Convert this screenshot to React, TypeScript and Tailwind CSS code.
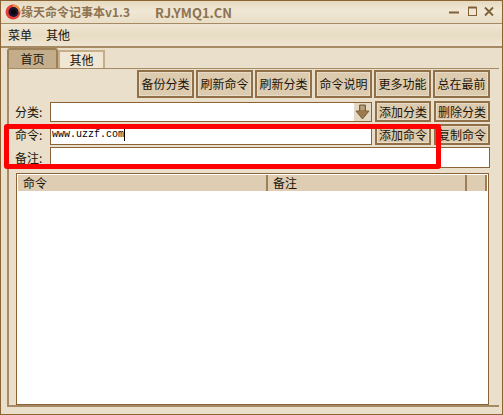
import type { ReactNode } from "react";

const cjk = "font-['Noto_Sans_CJK_SC','Liberation_Sans',sans-serif]";

function Btn({ w, h = "h-[28px]", children }: { w: string; h?: string; children: ReactNode }) {
  return (
    <div
      className={`${w} ${h} flex shrink-0 items-center justify-center overflow-hidden whitespace-nowrap border-2 border-[#8f7048] bg-[#dccbae] text-[12px] leading-none text-[#1c1408] shadow-[inset_0_0_0_1px_#e8dcc6]`}
    >
      {children}
    </div>
  );
}

function Label({ children }: { children: ReactNode }) {
  return <div className="w-[41px] shrink-0 whitespace-nowrap pl-[6px] text-[12px] leading-none text-[#1c1408]">{children}</div>;
}

function AppIcon() {
  return (
    <svg width="16" height="16" viewBox="0 0 16 16" className="shrink-0">
      <circle cx="8" cy="8" r="7.5" fill="#e2403a" />
      <path d="M8 .5A7.5 7.5 0 0 1 15.5 8H8z" fill="#e8913a" />
      <circle cx="8.5" cy="8" r="5" fill="#1a1430" />
      <circle cx="8.5" cy="8" r="2.5" fill="#0a0708" />
    </svg>
  );
}

function WindowButtons() {
  return (
    <svg width="45" height="12" viewBox="0 0 45 12" className="shrink-0" fill="none" stroke="#7f6038">
      <path d="M0 6.5h10" strokeWidth="2" />
      <rect x="19.5" y="1.5" width="8" height="8" strokeWidth="1" />
      <path d="M19.5 1.5h8" strokeWidth="2" />
      <path d="M36 1.5l8 8M44 1.5l-8 8" strokeWidth="1.8" />
    </svg>
  );
}

function DropArrow() {
  return (
    <div className="flex h-full w-[17px] items-center justify-center bg-[#e4d9c4]">
      <svg width="15" height="16" viewBox="0 0 15 16">
        <path d="M4.5 1h6v6h3.5L7.5 15 1 7h3.5z" fill="#9b7a50" stroke="#7d5f3a" strokeWidth="1" />
        <path d="M5.5 3h4M5.5 5h4" stroke="#d9c8a8" strokeWidth="1" />
      </svg>
    </div>
  );
}

export default function App() {
  return (
    <div
      className={`${cjk} relative flex h-[415px] w-[503px] flex-col overflow-hidden border border-[#8a6437] bg-[#e9dfca]`}
    >
      {/* title bar */}
      <div className="flex h-[22px] shrink-0 items-center bg-[linear-gradient(180deg,#e6dabf_0%,#f0e7d5_45%,#e9dec7_100%)] pl-[4px] pr-[8px]">
        <AppIcon />
        <span className="text-[12px] font-bold leading-none text-[#8d7350]">缘天命令记事本v1.3</span>
        <span className="ml-[25px] text-[13px] font-bold leading-none text-[#8d7350]">RJ.YMQ1.CN</span>
        <div className="ml-auto">
          <WindowButtons />
        </div>
      </div>

      {/* menu */}
      <div className="flex h-[25px] shrink-0 items-center gap-[14px] border-t border-b-2 border-t-[#a58a63] border-b-[#a58a63] bg-[linear-gradient(180deg,#efe6d3_0%,#e8dcc4_50%,#eee5d2_100%)] pl-[7px] text-[12px] leading-none text-[#1c1408]">
        <span>菜单</span>
        <span>其他</span>
      </div>

      {/* tabs */}
      <div className="ml-[6px] flex h-[20px] shrink-0 items-end">
        <div className="flex h-[20px] w-[51px] items-center justify-center rounded-t-[3px] border-x-2 border-t-2 border-[#9c8058] bg-[#c4ad8a] text-[12px] leading-none text-[#1c1408]">
          首页
        </div>
        <div className="flex h-[18px] w-[47px] items-center justify-center border-x-2 border-t-2 border-x-[#c6ae88] border-t-[#c6ae88] bg-[#efe6d4] text-[12px] leading-none text-[#1c1408]">
          其他
        </div>
      </div>

      {/* tab panel */}
      <div className="ml-[6px] flex min-h-0 w-[492px] flex-1 flex-col border-l-2 border-t border-b-2 border-[#a58a63]">
        <div className="mt-[1px] flex h-[28px] shrink-0 pl-[128px]">
          <Btn w="w-[57px] mr-[2px]">备份分类</Btn>
          <Btn w="w-[57px] mr-[2px]">刷新命令</Btn>
          <Btn w="w-[57px] mr-[3px]">刷新分类</Btn>
          <Btn w="w-[57px] mr-[2px]">命令说明</Btn>
          <Btn w="w-[57px] mr-[2px]">更多功能</Btn>
          <Btn w="w-[57px]">总在最前</Btn>
        </div>

        <div className="mt-[3px] flex h-[21px] shrink-0 items-center">
          <Label>分类:</Label>
          <div className="mt-[1px] flex h-[20px] w-[322px] shrink-0 justify-end border border-[#8a6437] bg-white">
            <DropArrow />
          </div>
          <div className="ml-[3px] flex gap-[3px]">
            <Btn w="w-[56px]" h="h-[21px]">添加分类</Btn>
            <Btn w="w-[56px]" h="h-[21px]">删除分类</Btn>
          </div>
        </div>

        <div className="mt-[2px] flex h-[21px] shrink-0 items-center">
          <Label>命令:</Label>
          <div className="flex h-[21px] w-[322px] shrink-0 items-center border border-[#8a6437] bg-white pl-[1px] font-['Liberation_Mono',monospace] text-[10px] leading-none text-black">
            www.uzzf.com
            <span className="h-[13px] w-[1px] bg-black" />
          </div>
          <div className="ml-[3px] flex gap-[3px]">
            <Btn w="w-[56px]" h="h-[21px]">添加命令</Btn>
            <Btn w="w-[56px]" h="h-[21px]">复制命令</Btn>
          </div>
        </div>

        <div className="mt-[2px] flex h-[21px] shrink-0 items-center">
          <Label>备注:</Label>
          <div className="h-[21px] w-[440px] shrink-0 border border-[#8a6437] bg-white" />
        </div>

        <div className="ml-[7px] mt-[5px] flex min-h-0 w-[473px] flex-1 flex-col border border-[#8a6437] bg-white">
          <div className="m-[1px] flex h-[16px] shrink-0 bg-[#decdb2] text-[12px] leading-none text-[#1c1408]">
            <div className="flex w-[250px] items-center border-r-2 border-[#9c8058] pl-[5px]">命令</div>
            <div className="flex w-[199px] items-center border-r-2 border-[#9c8058] pl-[5px]">备注</div>
            <div className="flex-1 border-r-2 border-[#9c8058]" />
          </div>
        </div>
      </div>
      <div className="h-[7px] shrink-0" />

      {/* annotation */}
      <div className="absolute left-[3px] top-[123px] h-[45px] w-[437px] rounded-[3px] border-[5px] border-[#ff0000]" />
    </div>
  );
}
